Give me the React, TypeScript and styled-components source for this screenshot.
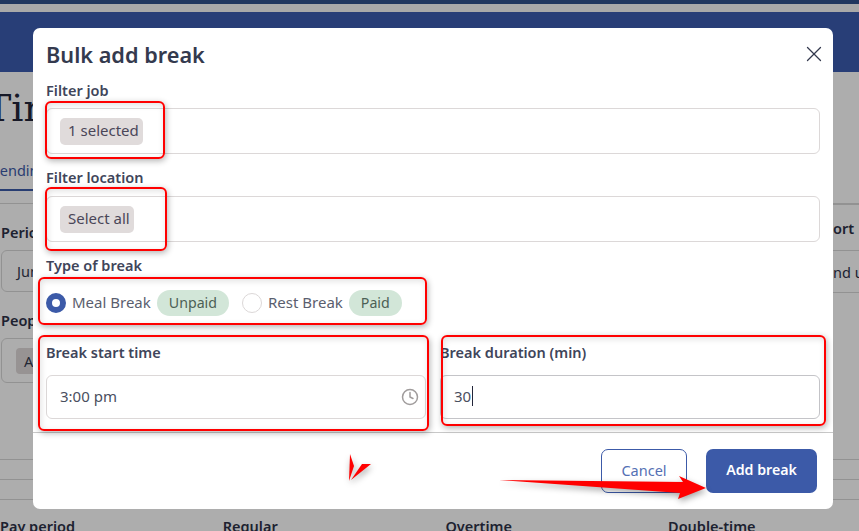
import styled, { createGlobalStyle } from 'styled-components';
import { Clock, X } from 'lucide-react';

const GlobalStyle = createGlobalStyle`
  html, body {
    margin: 0;
    padding: 0;
    height: 100%;
    overflow: hidden;
    background: #ffffff;
  }
  * {
    box-sizing: border-box;
  }
  body {
    font-family: 'Noto Sans', 'Liberation Sans', sans-serif;
    color: #343a4e;
  }
`;

const Page = styled.div`
  position: relative;
  width: 859px;
  height: 531px;
  overflow: hidden;
`;

// page behind the dialog
const Backdrop = styled.div`
  display: flex;
  flex-direction: column;
`;

const TopStrip = styled.div`
  height: 4px;
  background: #32518c;
`;

const WhiteStrip = styled.div`
  height: 8px;
  background: #fafafa;
`;

const Navbar = styled.div`
  height: 60px;
  background: #3c5cb0;
`;

const PageTitle = styled.h1`
  margin: 9px 0 5px -14px;
  height: 54px;
  font-family: 'DejaVu Serif', serif;
  font-size: 38px;
  line-height: 54px;
  font-weight: 400;
  color: #22263a;
`;

const Tabs = styled.div`
  height: 64px;
  padding-top: 19px;
  border-bottom: 1px solid #d8d8d8;
`;

const Tab = styled.span`
  display: inline-block;
  height: 30px;
  margin-left: -9px;
  padding-right: 30px;
  border-bottom: 2px solid #3c5aa8;
  font-size: 14.5px;
  line-height: 18px;
  color: #3c5aa8;
`;

const FilterPanel = styled.div`
  display: flex;
  justify-content: space-between;
  height: 255px;
  padding-left: 1px;
`;

const FilterColumn = styled.div`
  width: 200px;
  padding-top: 18px;
`;

const FilterLabel = styled.div`
  height: 20px;
  margin-bottom: 8px;
  font-size: 14.5px;
  line-height: 20px;
  font-weight: 600;
  color: #2d3148;
`;

const FilterBox = styled.div<{ $tall?: boolean }>`
  display: flex;
  align-items: center;
  height: ${p => (p.$tall ? 45 : 42)}px;
  margin-bottom: 18px;
  padding-left: ${p => (p.$tall ? 14 : 15)}px;
  border: 1px solid #d8d8d8;
  border-radius: 6px;
  font-size: 14.5px;
`;

const FilterChip = styled.span`
  padding: 3px 30px 3px 8px;
  border-radius: 4px;
  background: #dfd9d9;
`;

const SideColumn = styled.div`
  width: 26px;
  overflow: hidden;
  white-space: nowrap;
`;

const SideCell = styled.div<{ $height: number }>`
  display: flex;
  align-items: center;
  height: ${p => p.$height}px;
  border-top: 1px solid #d8d8d8;
  font-size: 14.5px;
  font-weight: 600;
  color: #2d3148;
`;

const SideValue = styled.span`
  font-weight: 400;
`;

const BandRow = styled.div`
  height: 20px;
  border-top: 1px solid #d8d8d8;
`;

const SummaryRow = styled.div`
  display: grid;
  grid-template-columns: repeat(4, 222.7px);
  padding-top: 17px;
  border-top: 1px solid #d8d8d8;
  font-size: 14.5px;
  line-height: 18px;
  font-weight: 600;
  color: #2d3148;
`;

const Scrim = styled.div`
  position: absolute;
  inset: 0;
  padding: 28px 0 0 33px;
  background: rgba(0, 0, 0, 0.32);
`;

// dialog
const Modal = styled.div`
  display: flex;
  flex-direction: column;
  width: 800px;
  height: 481px;
  border-radius: 7px;
  background: #ffffff;
`;

const ModalHeader = styled.div`
  display: flex;
  align-items: center;
  justify-content: space-between;
  height: 53px;
  padding: 0 6px 1px 13px;
`;

const ModalTitle = styled.h2`
  margin: 0;
  font-size: 21.7px;
  font-weight: 600;
  color: #343a4e;
`;

const CloseButton = styled.button`
  display: flex;
  padding: 0;
  border: 0;
  background: none;
  color: #343a4e;
`;

const ModalBody = styled.div`
  flex: 1;
  padding: 0 13px;
`;

const Label = styled.div<{ $gap: number }>`
  height: 20px;
  margin-bottom: ${p => p.$gap}px;
  font-size: 14.5px;
  line-height: 19px;
  font-weight: 600;
  color: #40455a;
`;

const SelectBox = styled.div`
  display: flex;
  align-items: center;
  height: 46px;
  margin-bottom: 14px;
  padding-left: 13px;
  border: 1px solid #dcd8d8;
  border-radius: 6px;
`;

const Chip = styled.span`
  display: flex;
  align-items: center;
  height: 27px;
  padding: 0 4px 2px 8px;
  border-radius: 5px;
  background: #e0dbdb;
  font-size: 15px;
  color: #4a4658;
`;

const RadioRow = styled.div`
  display: flex;
  align-items: center;
  height: 26px;
  margin-bottom: 27px;
`;

const RadioOption = styled.div`
  display: flex;
  align-items: center;
  margin-right: 13px;
`;

const RadioDot = styled.span<{ $checked?: boolean }>`
  width: 20px;
  height: 20px;
  margin-right: 6px;
  border-radius: 50%;
  background: #ffffff;
  border: ${p => (p.$checked ? '6px solid #3c5aa8' : '1px solid #dcd8d8')};
`;

const RadioText = styled.span`
  margin-right: 6px;
  padding-bottom: 2px;
  font-size: 15px;
  color: #5a5e6e;
`;

const Pill = styled.span`
  display: flex;
  align-items: center;
  height: 26px;
  padding: 0 12px 2px;
  border-radius: 13px;
  background: #d2e6d8;
  font-size: 14.2px;
  color: #4c6055;
`;

const TimeRow = styled.div`
  display: grid;
  grid-template-columns: 380px 380px;
  column-gap: 14px;
`;

const TextBox = styled.div<{ $focused?: boolean }>`
  display: flex;
  align-items: center;
  justify-content: space-between;
  height: 44px;
  padding: 0 6px 2px 13px;
  border: 1px solid ${p => (p.$focused ? '#c4c4c8' : '#dcd8d8')};
  border-radius: 6px;
  font-size: 15px;
  color: #4a4f60;
`;

const CaretText = styled.span`
  padding-right: 1px;
  border-right: 1px solid #22263a;
  line-height: 20px;
`;

const ClockIcon = styled(Clock)`
  margin-top: 2px;
  color: #a09c9c;
`;

const ModalFooter = styled.div`
  display: flex;
  justify-content: flex-end;
  gap: 19px;
  height: 77px;
  padding: 16px 16px 0 0;
  border-top: 1px solid #c8c8c8;
`;

const GhostButton = styled.button`
  width: 86px;
  height: 44px;
  padding-bottom: 4px;
  border: 1px solid #3c5aa8;
  border-radius: 7px;
  background: #ffffff;
  font: inherit;
  font-size: 14.5px;
  color: #5470b4;
`;

const PrimaryButton = styled.button`
  width: 111px;
  height: 44px;
  padding-bottom: 4px;
  border: 0;
  border-radius: 7px;
  background: #3c5aa8;
  font: inherit;
  font-size: 14.2px;
  font-weight: 600;
  color: #ffffff;
`;

// red markup painted over the screenshot
const Markup = styled.div<{ $x: number; $y: number; $w: number; $h: number }>`
  position: absolute;
  left: ${p => p.$x}px;
  top: ${p => p.$y}px;
  width: ${p => p.$w}px;
  height: ${p => p.$h}px;
  border: 2px solid #ff0000;
  border-radius: 6px;
  box-shadow: 1px 2px 6px rgba(0, 0, 0, 0.3), inset 1px 2px 6px rgba(0, 0, 0, 0.12);
`;

const Scribbles = styled.svg`
  position: absolute;
  left: 0;
  top: 0;
  filter: drop-shadow(1px 3px 3px rgba(0, 0, 0, 0.35));
`;

const boxes = [
  { x: 45, y: 101, w: 120, h: 58 },
  { x: 45, y: 187, w: 122, h: 64 },
  { x: 38, y: 277, w: 389, h: 48 },
  { x: 38, y: 335, w: 391, h: 96 },
  { x: 441, y: 335, w: 385, h: 91 },
];

export default function App() {
  return (
    <Page>
      <GlobalStyle />
      <Backdrop>
        <TopStrip />
        <WhiteStrip />
        <Navbar />
        <PageTitle>Timesheets</PageTitle>
        <Tabs>
          <Tab>Pending approval</Tab>
        </Tabs>
        <FilterPanel>
          <FilterColumn>
            <FilterLabel>Period</FilterLabel>
            <FilterBox>June</FilterBox>
            <FilterLabel>People</FilterLabel>
            <FilterBox $tall>
              <FilterChip>All</FilterChip>
            </FilterBox>
          </FilterColumn>
          <SideColumn>
            <SideCell $height={46}>ort</SideCell>
            <SideCell $height={42}>
              <SideValue>nd up</SideValue>
            </SideCell>
            <SideCell $height={1} />
          </SideColumn>
        </FilterPanel>
        <BandRow />
        <BandRow />
        <SummaryRow>
          <span>Pay period</span>
          <span>Regular</span>
          <span>Overtime</span>
          <span>Double-time</span>
        </SummaryRow>
      </Backdrop>

      <Scrim>
        <Modal>
          <ModalHeader>
            <ModalTitle>Bulk add break</ModalTitle>
            <CloseButton>
              <X size={26} strokeWidth={1.2} />
            </CloseButton>
          </ModalHeader>
          <ModalBody>
            <Label $gap={7}>Filter job</Label>
            <SelectBox>
              <Chip>1 selected</Chip>
            </SelectBox>
            <Label $gap={8}>Filter location</Label>
            <SelectBox>
              <Chip>Select all</Chip>
            </SelectBox>
            <Label $gap={14}>Type of break</Label>
            <RadioRow>
              <RadioOption>
                <RadioDot $checked />
                <RadioText>Meal Break</RadioText>
                <Pill>Unpaid</Pill>
              </RadioOption>
              <RadioOption>
                <RadioDot />
                <RadioText>Rest Break</RadioText>
                <Pill>Paid</Pill>
              </RadioOption>
            </RadioRow>
            <TimeRow>
              <div>
                <Label $gap={12}>Break start time</Label>
                <TextBox>
                  3:00 pm
                  <ClockIcon size={18} strokeWidth={2} />
                </TextBox>
              </div>
              <div>
                <Label $gap={12}>Break duration (min)</Label>
                <TextBox $focused>
                  <CaretText>30</CaretText>
                </TextBox>
              </div>
            </TimeRow>
          </ModalBody>
          <ModalFooter>
            <GhostButton>Cancel</GhostButton>
            <PrimaryButton>Add break</PrimaryButton>
          </ModalFooter>
        </Modal>
      </Scrim>

      {boxes.map(b => (
        <Markup key={b.y + b.x} $x={b.x} $y={b.y} $w={b.w} $h={b.h} />
      ))}
      <Scribbles width="859" height="531" viewBox="0 0 859 531">
        <path d="M499 480L683 482L679 476L706 488L678 499L680 493Z" fill="#ff0000" />
        <path d="M350 454L354 466L349 481Z" fill="#ff0000" />
        <path d="M351 480L362 464L371 464Z" fill="#ff0000" />
      </Scribbles>
    </Page>
  );
}
